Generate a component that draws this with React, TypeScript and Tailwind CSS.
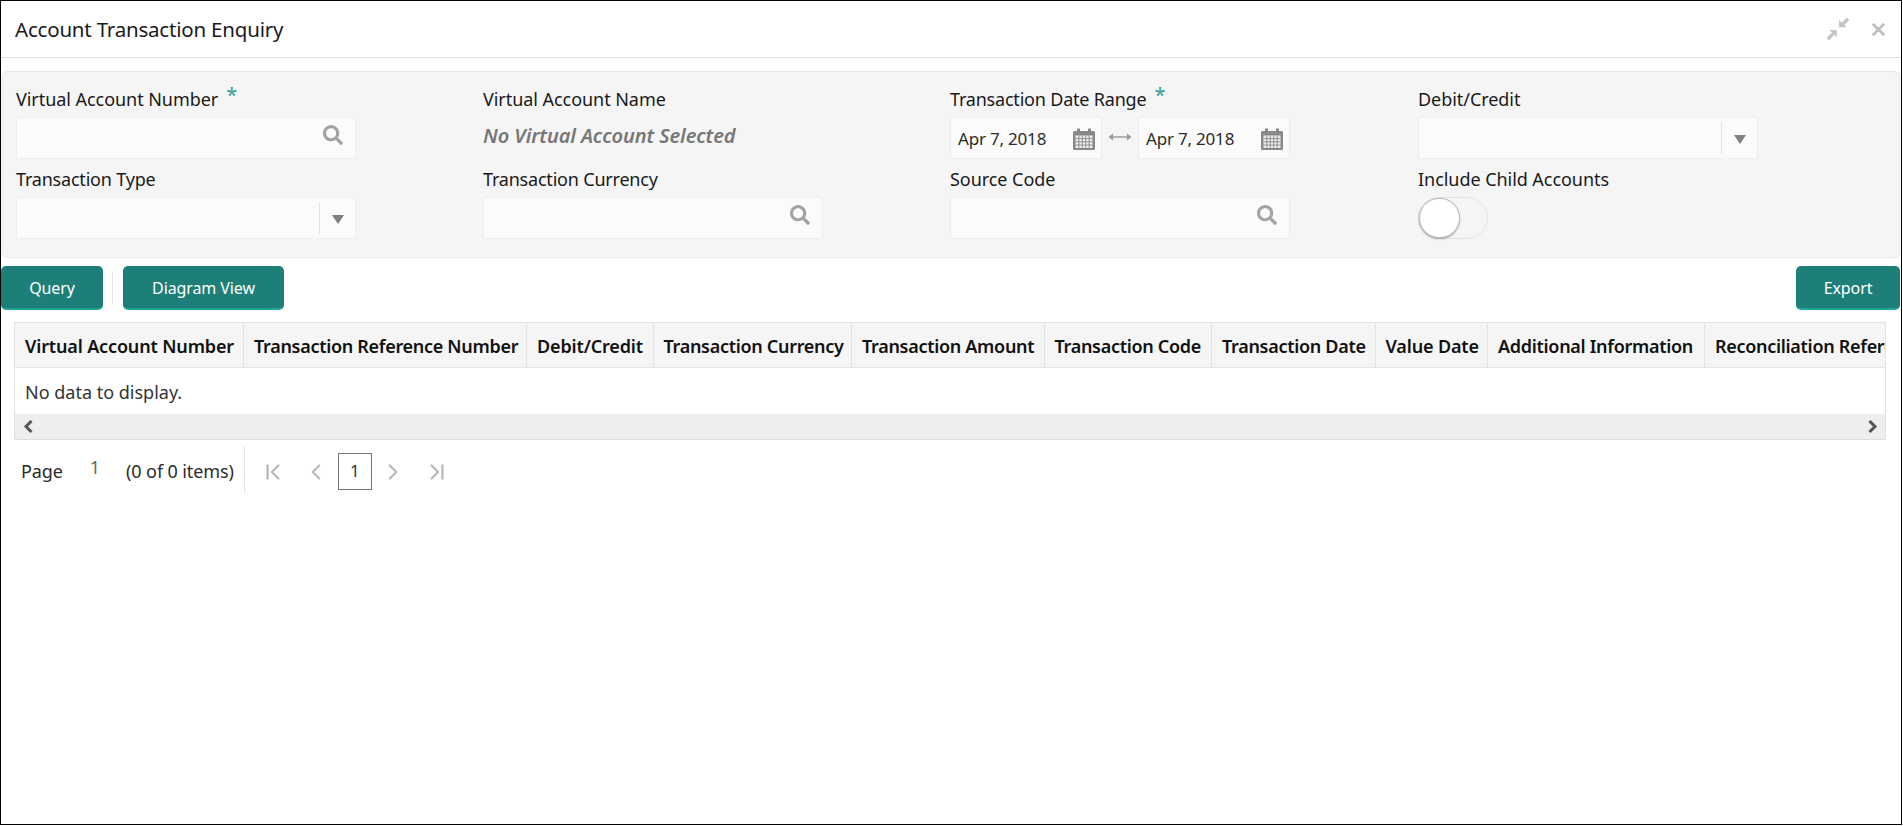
import { ChevronFirst, ChevronLast, ChevronLeft, ChevronRight } from "lucide-react";
import { FaSearch } from "react-icons/fa";

const font = "font-['Noto_Sans','Open_Sans',sans-serif]";

function Label({ text, required, tight }: { text: string; required?: boolean; tight?: boolean }) {
  return (
    <div className={`h-[35px] flex items-center text-[18px] text-[#1a1a1a] ${tight ? "tracking-[-0.2px]" : "tracking-[-0.05px]"}`}>
      <span>{text}</span>
      {required && <span className="ml-[8px] -mt-[9px] text-[20px] leading-none text-[#2a9d95]">*</span>}
    </div>
  );
}

function SearchField() {
  return (
    <div className="w-[340px] h-[42px] bg-[#fbfbfb] border border-[#eeeeee] rounded-[2px] flex items-center justify-end pr-[12px]">
      <FaSearch className="w-[20px] h-[20px] -mt-[6px] text-[#a3a3a3]" />
    </div>
  );
}

function SelectField() {
  return (
    <div className="w-[340px] h-[42px] bg-[#fbfbfb] border border-[#eeeeee] rounded-[2px] flex items-center justify-end">
      <div className="h-[32px] border-l border-[#e2e2e2] w-[36px] flex items-center justify-center">
        <svg className="mt-[2px]" width="12" height="9" viewBox="0 0 12 9"><path d="M0 0h12L6 9z" fill="#808080" /></svg>
      </div>
    </div>
  );
}

function CalendarIcon() {
  return (
    <svg className="mt-[2px]" width="22" height="22" viewBox="0 0 22 22">
      <path d="M0 4.5a1.5 1.5 0 0 1 1.5-1.5H4V0.5h3V3h8V0.5h3V3h2.5A1.5 1.5 0 0 1 22 4.5v16a1.5 1.5 0 0 1-1.5 1.5h-19A1.5 1.5 0 0 1 0 20.5z" fill="#888888" />
      <path d="M2.5 7.5h17v12.5h-17z" fill="#eeeeee" />
      <path d="M2.5 10.6h17M2.5 13.8h17M2.5 17h17M5.9 7.5v12.5M9.3 7.5v12.5M12.7 7.5v12.5M16.1 7.5v12.5" stroke="#888888" strokeWidth="0.9" />
    </svg>
  );
}

function DateField() {
  return (
    <div className="w-[152px] h-[42px] bg-[#fbfbfb] border border-[#eeeeee] rounded-[2px] flex items-center justify-between pl-[7px] pr-[6px] text-[17px] text-[#2b2b2b] tracking-[-0.2px]">
      <span className="mt-[2px]">Apr 7, 2018</span>
      <CalendarIcon />
    </div>
  );
}

function Btn({ children, w }: { children: string; w: string }) {
  return (
    <button className={`${w} h-[44px] pt-[2px] bg-[#1d7f78] border-b-2 border-[#1fa398] rounded-[5px] text-white text-[16px] tracking-[-0.1px]`}>
      {children}
    </button>
  );
}

const cols: [string, string, string][] = [
  ["Virtual Account Number", "w-[229px]", "tracking-[-0.15px]"],
  ["Transaction Reference Number", "w-[283px]", "tracking-[-0.3px]"],
  ["Debit/Credit", "w-[126.5px]", "tracking-[-0.15px]"],
  ["Transaction Currency", "w-[198.5px]", "tracking-[-0.3px]"],
  ["Transaction Amount", "w-[192.5px]", "tracking-[-0.3px]"],
  ["Transaction Code", "w-[167.5px]", "tracking-[-0.3px]"],
  ["Transaction Date", "w-[163.5px]", "tracking-[-0.3px]"],
  ["Value Date", "w-[112.5px]", "tracking-[-0.15px]"],
  ["Additional Information", "w-[217px]", "tracking-[-0.3px]"],
  ["Reconciliation Reference Number", "w-[320px]", "tracking-[-0.3px]"],
];

export default function App() {
  return (
    <div className={`${font} w-[1902px] h-[825px] border border-black bg-white flex flex-col overflow-hidden`}>
      <header className="h-[57px] shrink-0 border-b border-[#dddddd] flex items-center justify-between pl-[14px] pr-[16px]">
        <h1 className="text-[20.5px] text-[#1a1a1a] tracking-[-0.2px]">Account Transaction Enquiry</h1>
        <div className="flex items-center gap-[23px]">
          <svg width="22" height="22" viewBox="0 0 22 22" fill="#c4c4c4">
            <path d="M12 2v7.3h7.7z" />
            <path d="M21 0.8l-6 6" stroke="#c4c4c4" strokeWidth="3.4" />
            <path d="M2.3 12h7.4v7.3z" />
            <path d="M0.8 21.2l5.4-5.6" stroke="#c4c4c4" strokeWidth="3.4" />
          </svg>
          <svg width="13" height="13" viewBox="0 0 13 13"><path d="M0.8 0.8l11.4 11.4M12.2 0.8L0.8 12.2" stroke="#bfbfbf" strokeWidth="2.8" /></svg>
        </div>
      </header>

      <section className="mt-[13px] mx-[1px] h-[187px] shrink-0 bg-[#f5f5f5] border border-[#e9e9e9] rounded-[5px] pl-[13px] pt-[10px] grid grid-cols-[467px_467px_468px_1fr] auto-rows-[80px]">
        <div className="flex flex-col"><Label text="Virtual Account Number" required /><SearchField /></div>
        <div className="flex flex-col"><Label text="Virtual Account Name" />
          <div className="h-[42px] flex items-center text-[20px] italic font-semibold text-[#777777] tracking-[-0.1px] -mt-[2px]">No Virtual Account Selected</div>
        </div>
        <div className="flex flex-col"><Label text="Transaction Date Range" required tight />
          <div className="flex items-center">
            <DateField />
            <svg className="mx-[6px] -mt-[2px] shrink-0" width="24" height="10" viewBox="0 0 24 10" fill="#999999"><path d="M3 4.3h18v1.4H3z" /><path d="M0.5 5L5 1.5v7zM23.5 5L19 1.5v7z" /></svg>
            <DateField />
          </div>
        </div>
        <div className="flex flex-col"><Label text="Debit/Credit" /><SelectField /></div>

        <div className="flex flex-col"><Label text="Transaction Type" tight /><SelectField /></div>
        <div className="flex flex-col"><Label text="Transaction Currency" tight /><SearchField /></div>
        <div className="flex flex-col"><Label text="Source Code" /><SearchField /></div>
        <div className="flex flex-col"><Label text="Include Child Accounts" />
          <div className="w-[70px] h-[42px] rounded-full border border-[#e3e3e3] bg-[#f5f5f5] flex items-center">
            <div className="w-[41px] h-[40px] rounded-full bg-white border border-[#bbbbbb] shadow-[0_1px_2px_rgba(0,0,0,0.3)]" />
          </div>
        </div>
      </section>

      <div className="mt-[8px] h-[44px] shrink-0 flex items-center pr-[1px]">
        <Btn w="w-[102px]">Query</Btn>
        <div className="ml-[9px] mr-[10px] h-[34px] border-l border-[#e5e5e5]" />
        <Btn w="w-[161px]">Diagram View</Btn>
        <div className="flex-1" />
        <Btn w="w-[104px]">Export</Btn>
      </div>

      <div className="mt-[12px] ml-[13px] w-[1872px] shrink-0 border border-[#e2e2e2] border-b-[#dddddd] overflow-hidden">
        <div className="flex h-[45px] bg-[#f5f5f5] border-b border-[#e5e5e5] w-max">
          {cols.map(([t, w, tr]) => (
            <div key={t} className={`${w} ${tr} shrink-0 flex items-center pl-[10px] pt-[3px] border-r border-[#e2e2e2] text-[18px] font-semibold text-[#111111] whitespace-nowrap`}>{t}</div>
          ))}
        </div>
        <div className="h-[46px] pt-[3px] flex items-center pl-[10px] text-[18px] text-[#333333]">No data to display.</div>
        <div className="h-[25px] bg-[#eeeeee] flex items-center justify-between pl-[8px] pr-[7px]">
          <svg width="10" height="13" viewBox="0 0 10 13" fill="none" stroke="#555555" strokeWidth="3"><path d="M8.5 1L3 6.5l5.5 5.5" /></svg>
          <svg width="10" height="13" viewBox="0 0 10 13" fill="none" stroke="#555555" strokeWidth="3"><path d="M1.5 1L7 6.5 1.5 12" /></svg>
        </div>
      </div>

      <div className="mt-[6px] ml-[20px] h-[47px] flex items-center text-[18px] text-[#2b2b2b] tracking-[-0.1px]">
        <span className="mt-[3px]">Page</span>
        <span className="ml-[27px] -mt-[5px] text-[#666666]">1</span>
        <span className="ml-[26px] mt-[3px]">(0 of 0 items)</span>
        <div className="ml-[10px] h-[47px] border-l border-[#e2e2e2]" />
        <ChevronFirst className="ml-[15px] mt-[5px] w-[26px] h-[26px] text-[#bbbbbb]" strokeWidth={2.2} />
        <ChevronLeft className="ml-[17.5px] mt-[5px] w-[26px] h-[26px] text-[#bbbbbb]" strokeWidth={2.2} />
        <div className="ml-[8.5px] w-[34px] h-[37px] mt-[3px] border border-[#777777] flex items-center justify-center text-[17px] text-[#333333]">1</div>
        <ChevronRight className="ml-[8.5px] mt-[5px] w-[26px] h-[26px] text-[#bbbbbb]" strokeWidth={2.2} />
        <ChevronLast className="ml-[17.5px] mt-[5px] w-[26px] h-[26px] text-[#bbbbbb]" strokeWidth={2.2} />
      </div>
    </div>
  );
}
